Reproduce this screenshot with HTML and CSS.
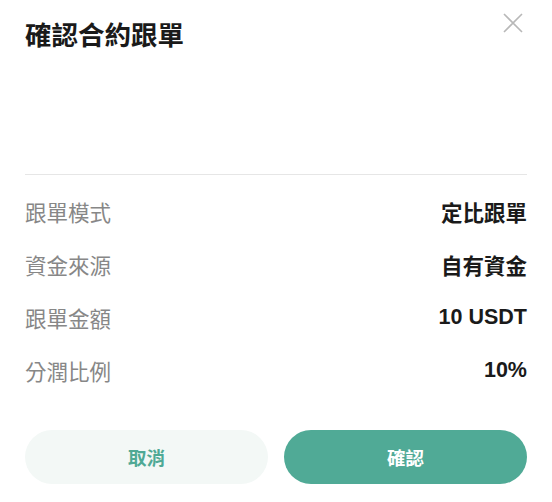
FILE: index.html
```html
<!DOCTYPE html>
<html lang="zh-Hant">

<head>
    <meta charset="utf-8">
    <meta name="viewport" content="width=device-width, initial-scale=1.0">
    <title>確認合約跟單</title>

    <link rel="stylesheet" href="styles.css">

</head>

<body>

    <div class="dialog">

        <header class="dialog_head">
            <h1>確認合約跟單</h1>
            <button class="luk" aria-label="關閉">
                <svg width="20" height="20" viewBox="0 0 20 20">
                    <path d="M1 1 L19 19 M19 1 L1 19" stroke="#b8b8b8" stroke-width="1.6" fill="none" />
                </svg>
            </button>
        </header>

        <div class="tom"></div>

        <section class="detaljer">
            <div class="raekke">
                <span class="navn">跟單模式</span>
                <span class="vaerdi">定比跟單</span>
            </div>
            <div class="raekke">
                <span class="navn">資金來源</span>
                <span class="vaerdi">自有資金</span>
            </div>
            <div class="raekke">
                <span class="navn">跟單金額</span>
                <span class="vaerdi">10 USDT</span>
            </div>
            <div class="raekke">
                <span class="navn">分潤比例</span>
                <span class="vaerdi">10%</span>
            </div>
        </section>

        <nav class="knapper">
            <button class="knap annuller">取消</button>
            <button class="knap bekraeft">確認</button>
        </nav>

    </div>

</body></html>
```

FILE: styles.css
```css
html {
    background-color: white;
}

body {
    margin: 0;
    font-family: "Noto Sans CJK TC", "Noto Sans", sans-serif;
    color: #1a1a1a;
}

.dialog {
    width: 552px;
    height: 502px;
    box-sizing: border-box;
    padding: 0 25px;
    display: flex;
    flex-direction: column;
}

.dialog_head {
    height: 72px;
    display: flex;
    justify-content: space-between;
    align-items: flex-start;
}

h1 {
    margin: 0;
    padding-top: 16px;
    font-size: 26.5px;
    line-height: 36px;
    font-weight: 700;
}

.luk {
    margin: 13px 4px 0 0;
    padding: 0;
    border: none;
    background: none;
    width: 20px;
    height: 20px;
}

.luk svg {
    display: block;
}

.tom {
    height: 102px;
    border-bottom: 1px solid #e6e6e6;
}

.detaljer {
    padding-top: 10px;
}

.raekke {
    height: 53px;
    display: flex;
    justify-content: space-between;
    align-items: center;
}

.navn {
    font-size: 21.5px;
    color: #878787;
}

.vaerdi {
    font-family: "Liberation Sans", "Noto Sans CJK TC", sans-serif;
    font-size: 21.5px;
    font-weight: 700;
}

.knapper {
    margin-top: 33px;
    display: grid;
    grid-template-columns: 1fr 1fr;
    gap: 16px;
}

.knap {
    height: 54px;
    border: none;
    border-radius: 27px;
    font-family: inherit;
    font-size: 18.5px;
    font-weight: 700;
}

.annuller {
    background-color: #f3f8f6;
    color: #4fa995;
}

.bekraeft {
    background-color: #50aa96;
    color: white;
}
```
